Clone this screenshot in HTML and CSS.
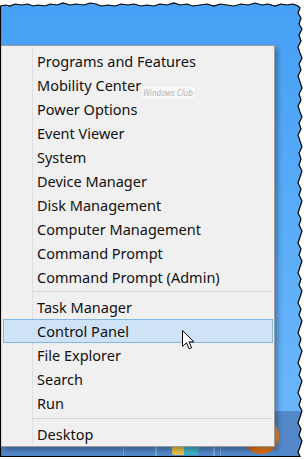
FILE: index.html
```html
<!DOCTYPE html>
<html lang="en">

<head>
  <meta charset="UTF-8">
  <meta name="viewport" content="width=device-width, initial-scale=1.0">
  <title>Win+X Menu</title>
  <link rel="stylesheet" href="styles.css">
</head>

<body>
  <div class="shot">
    <div class="screen">
      <div class="desktop"></div>
      <div class="taskbar">
        <span class="tb-btn"></span>
        <span class="tb-btn tb-wide"><span class="app-icon"></span></span>
        <span class="tb-btn tb-thin"></span>
        <span class="app-ball"></span>
      </div>
    </div>

    <!-- Win+X power user menu -->
    <ul class="menu">
      <li class="menu-item">Programs and Features</li>
      <li class="menu-item">Mobility Center</li>
      <li class="menu-item">Power Options</li>
      <li class="menu-item">Event Viewer</li>
      <li class="menu-item">System</li>
      <li class="menu-item">Device Manager</li>
      <li class="menu-item">Disk Management</li>
      <li class="menu-item">Computer Management</li>
      <li class="menu-item">Command Prompt</li>
      <li class="menu-item">Command Prompt (Admin)</li>
      <li class="menu-sep"></li>
      <li class="menu-item">Task Manager</li>
      <li class="menu-item active">Control Panel</li>
      <li class="menu-item">File Explorer</li>
      <li class="menu-item">Search</li>
      <li class="menu-item">Run</li>
      <li class="menu-sep menu-sep-low"></li>
      <li class="menu-item">Desktop</li>
    </ul>

    <span class="watermark">Windows Club</span>

    <svg class="cursor" width="13" height="20" viewBox="0 0 13 20">
      <path d="M0.5 0.5 L0.5 16.5 L4.5 12.8 L7.2 18.8 L9.6 17.8 L7 11.9 L12 11.9 Z" fill="#fff" stroke="#000" stroke-width="1" stroke-linejoin="miter"/>
    </svg>

    <!-- torn paper edge of the screenshot -->
    <svg class="torn" width="307" height="460" viewBox="0 0 307 460">
      <path fill="#fff" fill-rule="evenodd" stroke="#000" stroke-width="1.2"
        d="M-5 -5 H312 V465 H-5 Z
           M0.5 6 L6 5 L10 6 L15 4 L22 5 L28 4 L33 6 L38 5 L45 6 L50 4 L57 5 L63 3 L70 5 L76 4 L84 5 L90 3
           L96 4 L101 6 L108 5 L115 6 L121 4 L128 5 L134 4 L141 6 L147 5 L154 6 L160 4 L167 5 L174 3 L180 5
           L187 4 L193 6 L200 5 L207 4 L214 6 L220 4 L227 5 L234 6 L241 4 L248 5 L255 3 L262 5 L268 4 L275 6
           L281 4 L287 5 L293 4 L298 6
           L300 8 L298 13 L301 18 L299 24 L302 29 L299 35 L301 41 L298 47 L300 53 L302 58 L299 64 L301 70
           L298 76 L300 82 L302 88 L299 94 L301 100 L298 106 L300 112 L302 117 L299 123 L301 129 L298 135
           L300 141 L302 147 L299 153 L301 159 L299 165 L302 171 L300 177 L298 183 L301 189 L299 195 L302 201
           L300 207 L298 213 L301 219 L299 225 L302 231 L300 237 L298 243 L301 249 L299 255 L302 261 L300 267
           L298 273 L301 279 L299 285 L302 291 L300 297 L298 303 L301 309 L299 315 L302 321 L300 327 L298 333
           L301 339 L299 345 L302 351 L300 357 L298 363 L301 369 L299 375 L302 381 L300 387 L298 393 L301 399
           L299 405 L302 411 L300 417 L298 423 L301 429 L299 435 L302 441 L300 447 L298 452 L300 456.5
           L0.5 456.5 Z"/>
    </svg>
  </div>
</body>

</html>
```

FILE: styles.css
```css
body {
  margin: 0;
  padding: 0;
  background-color: #fff;
  font-family: "Segoe UI", "Noto Sans", sans-serif;
}

.shot {
  position: relative;
  width: 307px;
  height: 460px;
  overflow: hidden;
  background-color: #fff;
}

.screen {
  display: flex;
  flex-direction: column;
  height: 457px;
}

.desktop {
  flex: 1;
  background: linear-gradient(#46a0f5, #6ab6fb);
}

.taskbar {
  height: 46px;
  display: flex;
  align-items: stretch;
  padding-left: 123px;
  background-color: #5388c9;
}

.tb-btn {
  width: 31px;
  border-left: 1px solid rgba(255, 255, 255, 0.25);
  border-right: 1px solid rgba(255, 255, 255, 0.25);
  display: flex;
  align-items: flex-end;
  justify-content: center;
}

.tb-wide {
  width: 56px;
}

.tb-thin {
  width: 5px;
  margin-right: 22px;
}

.app-icon {
  width: 26px;
  height: 14px;
  margin-bottom: 2px;
  border-radius: 6px 6px 2px 2px;
  background: linear-gradient(to right, #e8c04a 0 45%, #3fb3c6 45% 100%);
}

.app-ball {
  width: 36px;
  height: 36px;
  margin-top: 7px;
  border-radius: 50%;
  background: radial-gradient(circle at 60% 40%, #ffd24a 0, #f08a1c 45%, #c23d0c 100%);
}

/* menu */
.menu {
  position: absolute;
  left: 0;
  top: 45px;
  width: 270px;
  margin: 0;
  padding: 3px 1px 0 2px;
  list-style: none;
  background-color: #f0f0f0;
  border: 1px solid #9a9a9a;
  box-shadow: 3px 3px 5px rgba(0, 0, 0, 0.3);
}

.menu::before {
  content: "";
  position: absolute;
  left: 31px;
  top: 2px;
  bottom: 2px;
  width: 1px;
  background-color: #e0e0e0;
}

.menu-item {
  position: relative;
  height: 22px;
  line-height: 22px;
  padding-left: 33px;
  border: 1px solid transparent;
  font-size: 14.5px;
  color: #111;
  white-space: nowrap;
}

.menu-item.active {
  background-color: #cfe3f6;
  border-color: #82b6ea;
}

.menu-sep {
  height: 6px;
  margin-left: 29px;
  margin-right: 1px;
  background: linear-gradient(#d6d6d6, #d6d6d6) 0 2px / 100% 1px no-repeat;
}

.menu-sep-low {
  height: 7px;
  background-position: 0 3px;
}

.watermark {
  position: absolute;
  left: 142px;
  top: 87px;
  padding: 0 1px;
  font-size: 8px;
  font-style: italic;
  color: #b4b4b4;
  background-color: rgba(255, 255, 255, 0.55);
}

.cursor {
  position: absolute;
  left: 182px;
  top: 330px;
}

.torn {
  position: absolute;
  left: 0;
  top: 0;
}
```
